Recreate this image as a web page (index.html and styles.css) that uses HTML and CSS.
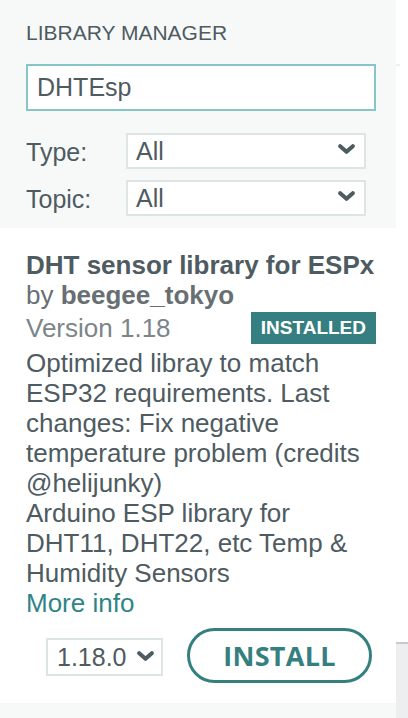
FILE: index.html
```html
<!DOCTYPE html>
<html lang="en">
<head>
<meta charset="utf-8">
<title>Library Manager</title>
<link rel="stylesheet" href="styles.css">
</head>
<body>
<div class="page">
  <div class="main">
    <section class="filters">
      <h2 class="title">LIBRARY MANAGER</h2>
      <input class="search" type="text" value="DHTEsp">
      <div class="filter-row">
        <label class="filter-label">Type:</label>
        <div class="select">
          <span class="select-value">All</span>
          <svg class="chev" viewBox="0 0 17 10" width="17" height="10"><path d="M2.2 2.2 L8.5 7.8 L14.8 2.2" fill="none" stroke="#4e5b61" stroke-width="4" stroke-linecap="round" stroke-linejoin="round"/></svg>
        </div>
      </div>
      <div class="filter-row">
        <label class="filter-label">Topic:</label>
        <div class="select">
          <span class="select-value">All</span>
          <svg class="chev" viewBox="0 0 17 10" width="17" height="10"><path d="M2.2 2.2 L8.5 7.8 L14.8 2.2" fill="none" stroke="#4e5b61" stroke-width="4" stroke-linecap="round" stroke-linejoin="round"/></svg>
        </div>
      </div>
    </section>
    <section class="card">
      <div class="lib-name">DHT sensor library for ESPx</div>
      <div class="lib-author">by <b>beegee_tokyo</b></div>
      <div class="version-row">
        <span class="version">Version 1.18</span>
        <span class="badge">INSTALLED</span>
      </div>
      <p class="desc">Optimized libray to match ESP32 requirements. Last changes: Fix negative temperature problem (credits @helijunky)</p>
      <p class="desc">Arduino ESP library for DHT11, DHT22, etc Temp &amp; Humidity Sensors</p>
      <a class="more" href="#">More info</a>
      <div class="actions">
        <div class="ver-select">
          <span>1.18.0</span>
          <svg class="chev" viewBox="0 0 17 10" width="17" height="10"><path d="M2.2 2.2 L8.5 7.8 L14.8 2.2" fill="none" stroke="#4e5b61" stroke-width="4" stroke-linecap="round" stroke-linejoin="round"/></svg>
        </div>
        <button class="install">INSTALL</button>
      </div>
    </section>
    <div class="next"></div>
  </div>
  <div class="side">
    <div class="side-top"></div>
    <div class="side-line"></div>
    <div class="side-gap"></div>
    <div class="side-block"></div>
  </div>
</div>
</body>
</html>
```
FILE: styles.css
```css
* { box-sizing: border-box; }
html, body { margin: 0; padding: 0; }
body {
  width: 408px;
  height: 718px;
  overflow: hidden;
  background: #ffffff;
  font-family: "Liberation Sans", Arial, Helvetica, sans-serif;
  color: #4e5b61;
}
.page {
  display: flex;
  height: 718px;
}
.main {
  width: 396px;
  display: flex;
  flex-direction: column;
}
.filters {
  background: #f7f9f9;
  height: 228px;
  padding: 21px 20px 0 26px;
}
.title {
  margin: 0;
  font-size: 21px;
  font-weight: normal;
  line-height: 24px;
  color: #4e5b61;
}
.search {
  display: block;
  margin-top: 19px;
  width: 350px;
  height: 47px;
  border: 2px solid #86c6c8;
  background: #ffffff;
  padding: 0 9px;
  font-family: inherit;
  font-size: 25px;
  color: #4e5b61;
  outline: none;
}
.filter-row {
  display: flex;
  align-items: center;
  margin-top: 11px;
}
.search + .filter-row { margin-top: 22px; }
.filter-label {
  width: 100px;
  font-size: 25px;
  padding-top: 3px;
}
.select {
  width: 240px;
  height: 36px;
  border: 2px solid #dde5e4;
  background: #ffffff;
  display: flex;
  align-items: center;
  justify-content: space-between;
  padding: 0 9px 0 8px;
  font-size: 25px;
}
.chev { display: block; }
.select .chev { margin-top: -4px; }
.card {
  flex: 1;
  background: #ffffff;
  padding: 22px 20px 20px 26px;
  font-size: 26px;
  line-height: 30px;
}
.lib-name {
  font-weight: bold;
  color: #4e5b61;
}
.lib-author {
  color: #686f73;
}
.lib-author b { color: #686f73; }
.version-row {
  display: flex;
  justify-content: space-between;
  align-items: center;
  margin-top: 2px;
  height: 32px;
}
.version {
  color: #7c8589;
}
.badge {
  background: #357f80;
  color: #ffffff;
  font-weight: bold;
  font-size: 19px;
  line-height: 32px;
  height: 32px;
  padding: 0 10px;
}
.desc {
  margin: 0;
  color: #4e5b61;
}
.version-row + .desc { margin-top: 4px; }
.more {
  display: block;
  color: #2f8586;
  text-decoration: none;
}
.actions {
  display: flex;
  align-items: center;
  margin-top: 10px;
  padding-left: 20px;
  gap: 24px;
}
.ver-select {
  width: 117px;
  height: 38px;
  margin-top: 3px;
  border: 2px solid #dde5e4;
  display: flex;
  align-items: center;
  gap: 10px;
  padding-left: 9px;
  font-size: 25px;
  line-height: 30px;
  color: #4e5b61;
}
.ver-select .chev { margin-top: -2px; }
.install {
  width: 185px;
  height: 55px;
  border: 3px solid #367f80;
  border-radius: 28px;
  background: #ffffff;
  color: #367f80;
  font-family: "Open Sans", "Liberation Sans", sans-serif;
  font-weight: bold;
  font-size: 27px;
  padding: 0;
  letter-spacing: 0.3px;
}
.next {
  height: 15px;
  background: #f7f9f9;
}
.side {
  width: 12px;
  display: flex;
  flex-direction: column;
}
.side-top { height: 64px; }
.side-line {
  width: 4px;
  height: 2px;
  background: #eef0f0;
}
.side-gap { flex: 1; }
.side-block {
  height: 76px;
  background: #eceef0;
  border-top: 2px solid #c8cbcc;
}
```
